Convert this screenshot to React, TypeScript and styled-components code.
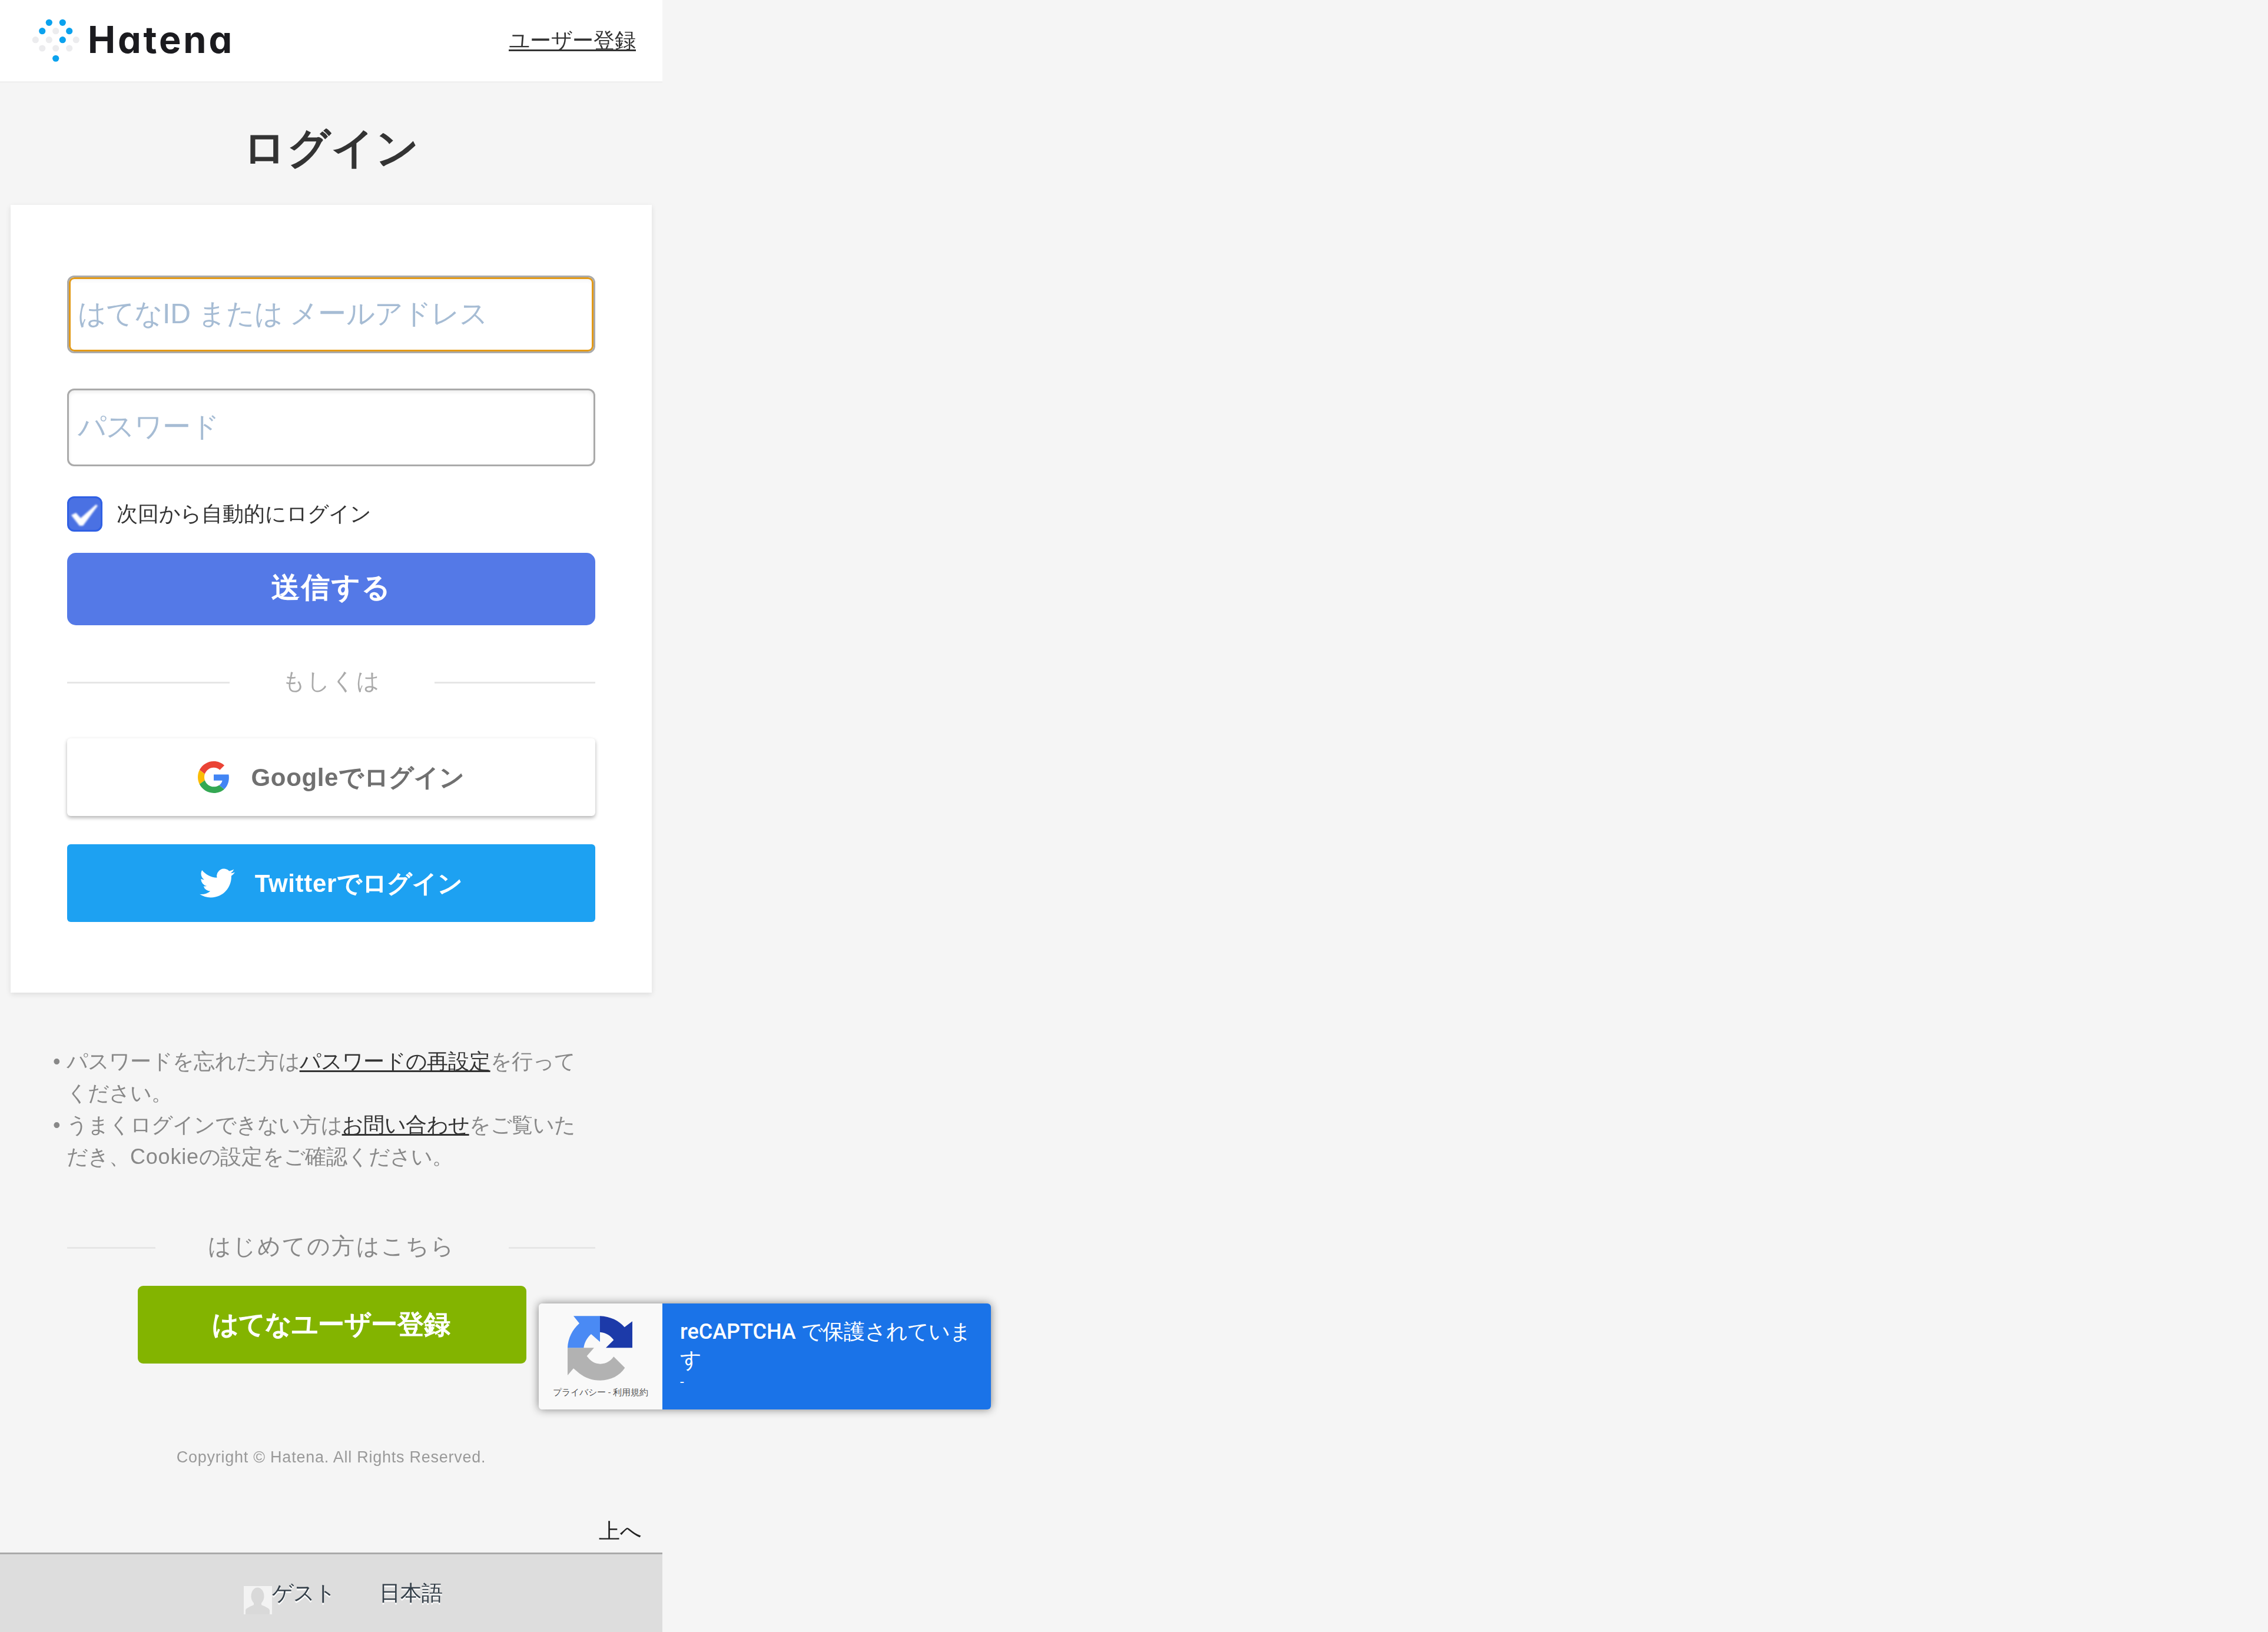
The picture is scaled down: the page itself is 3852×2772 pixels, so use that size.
import React from 'react';
import styled, { createGlobalStyle } from 'styled-components';

const Global = createGlobalStyle`
  html, body { margin: 0; padding: 0; background: #f5f5f5; }
  body {
    font-family: "Liberation Sans", sans-serif;
    color: #333;
  }
  * { box-sizing: border-box; }
`;

/* The page is a 375px mobile layout photographed at three device pixels per CSS pixel. */
const Stage = styled.div`
  width: 1125px;
  height: 2772px;
`;

const Page = styled.div`
  position: relative;
  width: 375px;
  height: 924px;
  transform: scale(3);
  transform-origin: 0 0;
`;

const Header = styled.header`
  height: 46px;
  background: #fff;
  box-shadow: 0 1px 0 #f0f0f0;
  display: flex;
  align-items: center;
  justify-content: space-between;
  padding: 0 15px 0 16.67px;
`;

const Brand = styled.div`
  display: flex;
  align-items: center;
  gap: 3px;
`;

const BrandDots = styled.svg`
  width: 30px;
  height: 26.67px;
  display: block;
`;

const BrandName = styled.span`
  font-family: Inter, "Liberation Sans", sans-serif;
  font-feature-settings: "cv11" 1;
  font-weight: 700;
  font-size: 21px;
  letter-spacing: 1.3px;
  line-height: 26px;
  color: #1b1b1f;
`;

const HeaderLink = styled.a`
  font-size: 12px;
  line-height: 18px;
  color: #333;
  text-decoration: underline;
`;

const Title = styled.h1`
  margin: 21px 0 16px;
  font-size: 24px;
  line-height: 33px;
  font-weight: 700;
  text-align: center;
  color: #333;
`;

const Card = styled.section`
  margin: 0 6px;
  padding: 40px 32px;
  background: #fff;
  box-shadow: 0 1px 3px rgba(0, 0, 0, 0.1);
`;

const TextField = styled.input<{ $focused?: boolean }>`
  display: block;
  width: 100%;
  height: 44px;
  padding: 0 5px;
  border: 1px solid #aaaaaa;
  border-radius: 4px;
  background: #fff;
  outline: none;
  font-family: inherit;
  font-size: 16px;
  word-spacing: -0.5px;
  box-shadow: ${(p) =>
    p.$focused
      ? 'inset 0 0 0 1px #e39a17, inset 0 2px 2px rgba(0,0,0,.04)'
      : 'inset 0 1px 2px rgba(0,0,0,.08)'};
  & + & { margin-top: 20px; }
  &::placeholder { color: #a6bcd4; opacity: 1; }
`;

const CheckRow = styled.label`
  display: flex;
  align-items: center;
  gap: 8px;
  margin-top: 17px;
  font-size: 12px;
  line-height: 20px;
  color: #333;
`;

const CheckBox = styled.span`
  display: block;
  width: 20px;
  height: 20px;
  border: 1px solid #3060e4;
  border-radius: 4px;
  background: #4a71e3;
  overflow: hidden;
`;

const CheckMark = styled.svg`
  display: block;
  width: 18px;
  height: 18px;
  filter: blur(0.5px);
`;

const SubmitButton = styled.button`
  display: block;
  width: 100%;
  height: 41px;
  margin-top: 12px;
  border: 0;
  border-radius: 5px;
  background: #5479e7;
  color: #fff;
  font-family: inherit;
  font-size: 16px;
  font-weight: 700;
  letter-spacing: 1px;
`;

const Rule = styled.div<{ $top: number; $bottom: number; $outer?: boolean }>`
  display: flex;
  align-items: center;
  gap: 30px;
  margin: ${(p) => p.$top}px ${(p) => (p.$outer ? 38 : 0)}px ${(p) => p.$bottom}px;
  font-size: 13px;
  letter-spacing: 1px;
  line-height: 18px;
  color: ${(p) => (p.$outer ? '#888' : '#aaa')};
  &::before, &::after {
    content: '';
    flex: 1;
    height: 1px;
    background: #e6e6e6;
  }
`;

const SocialButton = styled.a<{ $tone: 'google' | 'twitter' }>`
  display: flex;
  align-items: center;
  justify-content: center;
  height: 44px;
  border-radius: 2px;
  font-size: 14px;
  font-weight: 700;
  letter-spacing: 0.22px;
  gap: ${(p) => (p.$tone === 'google' ? 12 : 11)}px;
  background: ${(p) => (p.$tone === 'google' ? '#fff' : '#1da1f2')};
  color: ${(p) => (p.$tone === 'google' ? '#707070' : '#fff')};
  box-shadow: ${(p) => (p.$tone === 'google' ? '0 1px 2px rgba(0,0,0,.3)' : 'none')};
  & + & { margin-top: 16px; }
`;

const SocialLabel = styled.span`
  margin-top: 2px;
`;

const GoogleIcon = styled.svg`
  width: 18px;
  height: 18px;
  display: block;
`;

const BirdIcon = styled.svg`
  width: 20px;
  height: 20px;
  display: block;
`;

const Notes = styled.ul`
  list-style: none;
  margin: 30px 0 0;
  padding: 0 42px 0 37.67px;
  font-size: 12px;
  line-height: 18px;
  color: #888;
`;

const Note = styled.li`
  text-indent: -7.67px;
  &::before { content: '• '; }
`;

const NoteLink = styled.a`
  color: #333;
  text-decoration: underline;
`;

const NoteLatin = styled.span`
  letter-spacing: 0.27px;
`;

const SignupButton = styled.a`
  display: flex;
  align-items: center;
  justify-content: center;
  width: 220px;
  height: 44px;
  margin: 0 auto;
  border-radius: 3px;
  background: #83b400;
  color: #fff;
  font-size: 15px;
  font-weight: 700;
`;

const Copyright = styled.p`
  margin: 47px 0 0;
  text-align: center;
  font-size: 9px;
  line-height: 12px;
  letter-spacing: 0.25px;
  color: #999;
`;

const BackToTop = styled.a`
  display: block;
  margin-top: 27px;
  padding: 0 12px 3px 0;
  text-align: right;
  font-size: 12px;
  line-height: 18px;
  color: #222;
`;

const Footer = styled.footer`
  height: 45px;
  display: flex;
  align-items: flex-start;
  padding: 13px 0 0 138px;
  background: #dddddd;
  border-top: 1px solid #aaaaaa;
  font-size: 12px;
  line-height: 18px;
  color: #333e48;
  text-shadow: 0 1px 0 #fff;
`;

const FooterItem = styled.span`
  display: flex;
  align-items: flex-start;
  & + & { margin-left: 24.5px; }
`;

const Avatar = styled.svg`
  width: 16px;
  height: 16px;
  margin-top: 5px;
  display: block;
`;

const RecaptchaBadge = styled.aside`
  position: absolute;
  left: 305px;
  top: 738px;
  width: 256px;
  height: 60px;
  display: flex;
  border-radius: 2px;
  overflow: hidden;
  box-shadow: 0 0 5px #808080;
  font-family: Roboto, sans-serif;
`;

const RecaptchaLogoPane = styled.div`
  width: 70px;
  display: flex;
  flex-direction: column;
  align-items: center;
  padding-top: 4px;
  background: #f9f9f9;
`;

const RecaptchaLogo = styled.svg`
  width: 43.33px;
  height: 43.33px;
  display: block;
  filter: blur(0.2px);
`;

const RecaptchaTerms = styled.span`
  font-size: 5px;
  line-height: 7px;
  color: #555;
  white-space: nowrap;
`;

const RecaptchaText = styled.div`
  flex: 1;
  padding: 8.33px 10px 0;
  background: #1a73e8;
  color: #fff;
  font-size: 12px;
  line-height: 16px;
  font-weight: 500;
`;

const RecaptchaDash = styled.div`
  font-size: 8px;
  line-height: 8px;
  margin-top: 1px;
  font-weight: 400;
`;

const blueDots = [
  [32.3, 8.3], [55.3, 8.3], [20.7, 22.7], [66.7, 22.7], [55.3, 37.7], [43.7, 69.3],
];
const greyDots = [
  [43.7, 22.7], [9.3, 37.7], [32.3, 37.7], [78.3, 37.7], [20.7, 52], [43.7, 52], [66.7, 52],
];

export default function App() {
  return (
    <Stage>
      <Global />
      <Page>
        <Header>
          <Brand>
            <BrandDots viewBox="0 0 90 80">
              {greyDots.map(([x, y]) => (
                <circle key={`g${x}${y}`} cx={x} cy={y} r={5.6} fill="#ececee" />
              ))}
              {blueDots.map(([x, y]) => (
                <circle key={`b${x}${y}`} cx={x} cy={y} r={5.6} fill="#0ba2ee" />
              ))}
            </BrandDots>
            <BrandName>Hatena</BrandName>
          </Brand>
          <HeaderLink>ユーザー登録</HeaderLink>
        </Header>

        <Title>ログイン</Title>

        <Card>
          <TextField $focused placeholder="はてなID または メールアドレス" />
          <TextField placeholder="パスワード" />
          <CheckRow>
            <CheckBox>
              <CheckMark viewBox="0 0 54 54">
                <path d="M4 29 L12 25 L20 34 L46 11 L49 13 L24 47 L18 47 Z" fill="#fff" />
              </CheckMark>
            </CheckBox>
            次回から自動的にログイン
          </CheckRow>
          <SubmitButton>送信する</SubmitButton>
          <Rule $top={23} $bottom={23}>もしくは</Rule>
          <SocialButton $tone="google">
            <GoogleIcon viewBox="0 0 48 48">
              <path fill="#EA4335" d="M24 9.5c3.54 0 6.71 1.22 9.21 3.6l6.85-6.85C35.9 2.38 30.47 0 24 0 14.62 0 6.51 5.38 2.56 13.22l7.98 6.19C12.43 13.72 17.74 9.5 24 9.5z" />
              <path fill="#4285F4" d="M46.98 24.55c0-1.57-.15-3.09-.38-4.55H24v9.02h12.94c-.58 2.96-2.26 5.48-4.78 7.18l7.73 6c4.51-4.18 7.09-10.36 7.09-17.65z" />
              <path fill="#FBBC05" d="M10.53 28.59c-.48-1.45-.76-2.99-.76-4.59s.27-3.14.76-4.59l-7.98-6.19C.92 16.46 0 20.12 0 24c0 3.88.92 7.54 2.56 10.78l7.97-6.19z" />
              <path fill="#34A853" d="M24 48c6.48 0 11.93-2.13 15.89-5.81l-7.73-6c-2.15 1.45-4.92 2.3-8.16 2.3-6.26 0-11.57-4.22-13.47-9.91l-7.98 6.19C6.51 42.62 14.62 48 24 48z" />
            </GoogleIcon>
            <SocialLabel>Googleでログイン</SocialLabel>
          </SocialButton>
          <SocialButton $tone="twitter">
            <BirdIcon viewBox="0 0 24 24">
              <path fill="#fff" d="M23.953 4.57a10 10 0 01-2.825.775 4.958 4.958 0 002.163-2.723c-.951.555-2.005.959-3.127 1.184a4.92 4.92 0 00-8.384 4.482C7.69 8.095 4.067 6.13 1.64 3.162a4.822 4.822 0 00-.666 2.475c0 1.71.87 3.213 2.188 4.096a4.904 4.904 0 01-2.228-.616v.06a4.923 4.923 0 003.946 4.827 4.996 4.996 0 01-2.212.085 4.936 4.936 0 004.604 3.417 9.867 9.867 0 01-6.102 2.105c-.39 0-.779-.023-1.17-.067a13.995 13.995 0 007.557 2.209c9.053 0 13.998-7.496 13.998-13.985 0-.21 0-.42-.015-.63A9.935 9.935 0 0024 4.59z" />
            </BirdIcon>
            <SocialLabel>Twitterでログイン</SocialLabel>
          </SocialButton>
        </Card>

        <Notes>
          <Note>パスワードを忘れた方は<NoteLink>パスワードの再設定</NoteLink>を行ってください。</Note>
          <Note>うまくログインできない方は<NoteLink>お問い合わせ</NoteLink>をご覧いただき、<NoteLatin>Cookie</NoteLatin>の設定をご確認ください。</Note>
        </Notes>

        <Rule $outer $top={33} $bottom={13}>はじめての方はこちら</Rule>
        <SignupButton>はてなユーザー登録</SignupButton>

        <Copyright>Copyright © Hatena. All Rights Reserved.</Copyright>
        <BackToTop>上へ</BackToTop>

        <Footer>
          <FooterItem>
            <Avatar viewBox="0 0 48 48">
              <rect width="48" height="48" fill="#f3f3f3" />
              <ellipse cx="23.5" cy="17" rx="11" ry="14.5" fill="#d9d9d9" />
              <path d="M17 28 h13 v4 c6 3 13 5 14 9 v7 H3 v-7 c1-4 8-6 14-9z" fill="#d9d9d9" />
            </Avatar>
            ゲスト
          </FooterItem>
          <FooterItem>日本語</FooterItem>
        </Footer>

        <RecaptchaBadge>
          <RecaptchaLogoPane>
            <RecaptchaLogo viewBox="0 0 390 390">
              <path fill="#b2b2b2" d="M30 190 H165 L128 232 C146 258 170 272 197 272 C226 272 248 258 265 235 L322 292 C296 332 250 356 197 356 C155 356 118 342 90 320 L60 295 L30 330 Z" />
              <path fill="#4a8af4" d="M60 28 H195 V160 L150 120 C130 138 116 160 112 190 H30 C32 140 54 98 90 65 Z" />
              <path fill="#1c3aa9" d="M195 28 C248 30 292 52 320 85 L360 55 V190 H225 L265 150 C248 126 224 112 195 110 Z" />
            </RecaptchaLogo>
            <RecaptchaTerms>プライバシー - 利用規約</RecaptchaTerms>
          </RecaptchaLogoPane>
          <RecaptchaText>
            reCAPTCHA で保護されています
            <RecaptchaDash>-</RecaptchaDash>
          </RecaptchaText>
        </RecaptchaBadge>
      </Page>
    </Stage>
  );
}
